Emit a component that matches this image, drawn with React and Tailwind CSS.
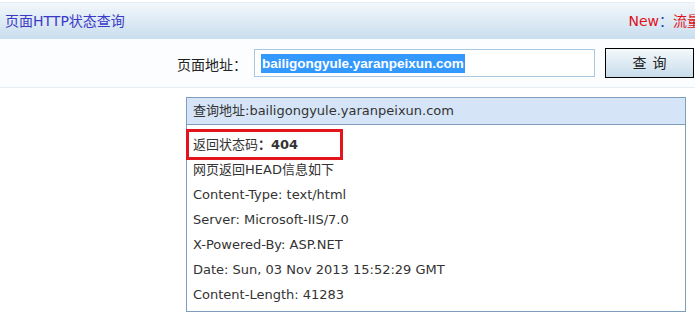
import React from 'react';

const headers = [
  'Content-Type: text/html',
  'Server: Microsoft-IIS/7.0',
  'X-Powered-By: ASP.NET',
  'Date: Sun, 03 Nov 2013 15:52:29 GMT',
  'Content-Length: 41283',
];

function Row({ children }) {
  return <div className="h-[25px] flex items-center pl-[6px]">{children}</div>;
}

export default function App() {
  return (
    <div
      className="w-[695px] h-[318px] overflow-hidden bg-white text-[#333]"
      style={{ fontFamily: '"DejaVu Sans", "Noto Sans CJK SC", sans-serif' }}
    >
      {/* top bar */}
      <div className="h-[37px] mt-[2px] border-t border-[#e4eef6] bg-gradient-to-b from-[#f2f7fb] to-[#c9deee] flex items-center justify-between pl-[5px] whitespace-nowrap">
        <span className="text-[14px] text-[#3a3ac6]">页面HTTP状态查询</span>
        <span className="text-[14px] text-[#e0101a] -mr-[34px]">
          New<span className="text-[#2040c0]">：</span>流量查询
        </span>
      </div>

      {/* form */}
      <div className="h-[49px] flex items-center border-b border-[#e6eef4] bg-[#fcfdfe]">
        <span className="ml-[177px] w-[77px] pt-[5px] text-[14px] text-[#222]">页面地址：</span>
        <div className="w-[341px] h-[28px] border border-[#a9c8df] bg-white flex items-center pl-[6px]">
          <span className="bg-[#3399ff] text-white font-bold text-[13.5px] leading-[19px] px-[1px] font-['Liberation_Sans',sans-serif]">
            bailigongyule.yaranpeixun.com
          </span>
        </div>
        <button className="ml-[10px] w-[89px] h-[30px] border border-black bg-gradient-to-b from-[#f4f9fc] to-[#c8dcea] text-[14px] text-[#222] tracking-[6px] pl-[6px]">
          查询
        </button>
      </div>

      {/* result */}
      <div className="ml-[186px] mt-[9px] w-[500px] border border-[#7d9fbd] text-[13px] pb-[4px]">
        <div className="h-[27px] bg-[#d5e5f7] border-b border-[#7d9fbd] flex items-center pl-[6px]">
          查询地址:bailigongyule.yaranpeixun.com
        </div>
        <div className="relative mt-[7px]">
          <Row>
            返回状态码<b>：404</b>
          </Row>
          <div className="absolute -left-px -top-[3px] w-[157px] h-[31px] border-[3px] border-[#e3141b]" />
        </div>
        <Row>网页返回HEAD信息如下</Row>
        {headers.map((h) => (
          <Row key={h}>{h}</Row>
        ))}
      </div>
    </div>
  );
}
